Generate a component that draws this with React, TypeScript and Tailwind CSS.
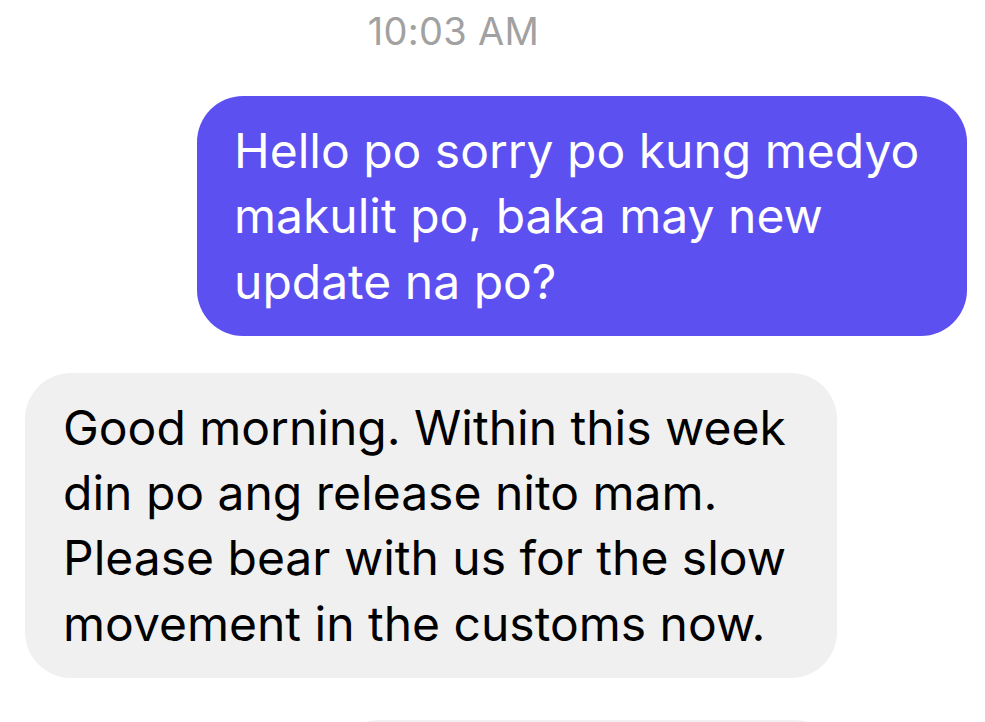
import React from "react";

const font = { fontFamily: "Inter, 'Noto Sans', sans-serif" };

export default function App() {
  return (
    <div className="w-[985px] h-[722px] overflow-hidden bg-white flex flex-col" style={font}>
      <div className="mt-[9px] pr-[78px] text-center text-[38px] leading-[44px] tracking-[0.3px] text-[#a1a1a1] whitespace-nowrap">
        10:03 AM
      </div>

      <div className="mt-[43px] flex justify-end pr-[18px]">
        <div className="w-[770px] rounded-[46px] bg-[#5d50f1] pl-[37px] pr-[20px] pt-[22px] pb-[22px] text-[48px] leading-[65.3px] text-white whitespace-nowrap">
          Hello po sorry po kung medyo
          <br />
          makulit po, baka may new
          <br />
          update na po?
        </div>
      </div>

      <div className="mt-[37px] flex justify-start pl-[25px]">
        <div className="w-[812px] rounded-[46px] bg-[#f0f0f0] pl-[38px] pr-[20px] pt-[22px] pb-[22px] text-[48px] leading-[65.3px] text-black whitespace-nowrap">
          Good morning. Within this week
          <br />
          din po ang release nito mam.
          <br />
          Please bear with us for the slow
          <br />
          movement in the customs now.
        </div>
      </div>

      <div className="mt-[42px] ml-[338px] w-[497px] h-[80px] shrink-0 rounded-[46px] bg-[#f0f0f0]" />
    </div>
  );
}
